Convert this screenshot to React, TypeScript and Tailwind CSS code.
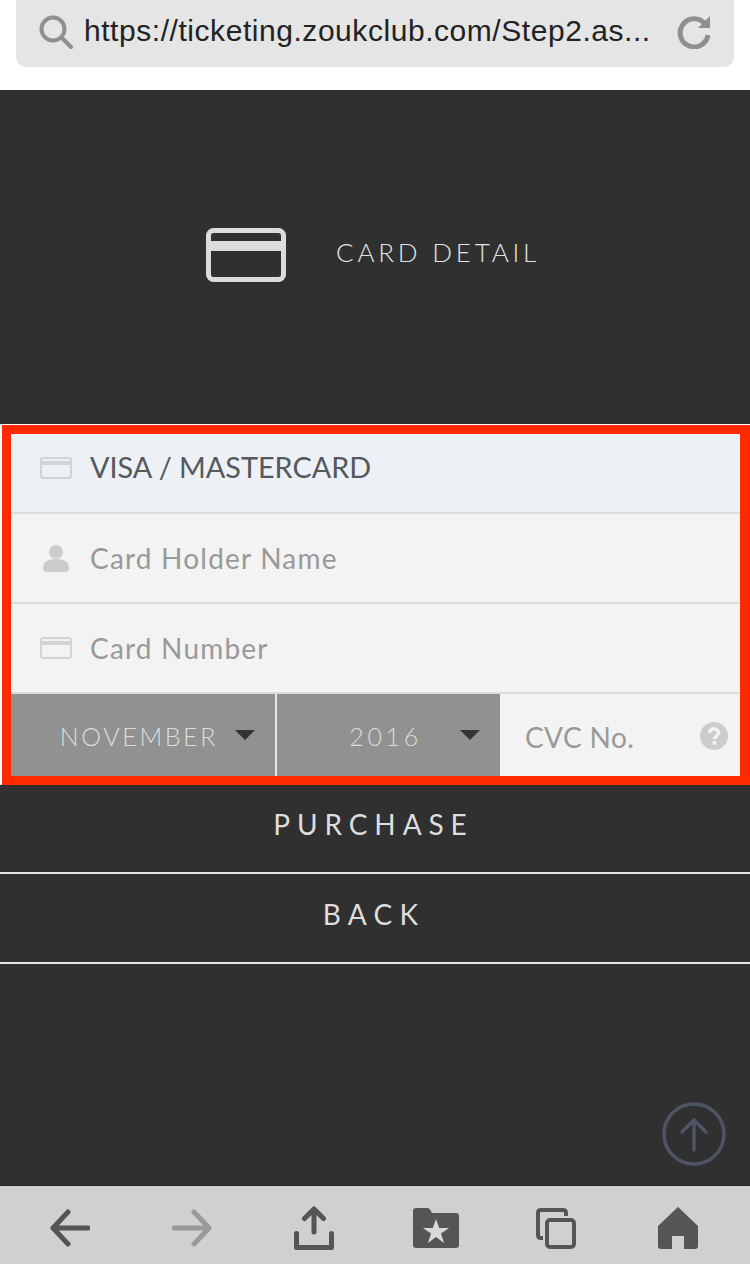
const CardIcon = ({ className = "" }: { className?: string }) => (
  <svg viewBox="0 0 32 22" className={className} fill="none">
    <rect x="1" y="1" width="30" height="20" rx="2" stroke="#d2d3d5" strokeWidth="2" />
    <rect x="1" y="4" width="30" height="4" fill="#d2d3d5" />
  </svg>
);

const futura = "font-['Lato','Open_Sans',sans-serif]";
const muli = "font-['Lato','Noto_Sans',sans-serif]";

function Caret() {
  return (
    <svg viewBox="0 0 20 10" className="w-[20px] h-[10px] shrink-0">
      <path d="M0 0H20L10 10Z" fill="#333333" />
    </svg>
  );
}

function Row({ icon, text, strong }: { icon: React.ReactNode; text: string; strong?: boolean }) {
  return (
    <div className={`flex items-center border-b-2 border-[#dcdcdc] ${strong ? "bg-[#edf0f5] h-[80px] pb-[10px]" : "bg-[#f3f3f3] h-[90px]"}`}>
      <div className="w-[32px] ml-[29px] flex justify-center">{icon}</div>
      <span className={`ml-[18px] ${muli} ${strong ? "text-[28.800px] text-[#55585d]" : "text-[28px] tracking-[1.2px] text-[#999999]"}`}>{text}</span>
    </div>
  );
}

export default function App() {
  return (
    <div className="relative w-[750px] h-[1264px] overflow-hidden bg-white flex flex-col">
      <div className="h-[90px] shrink-0 px-4">
        <div className="h-[67px] bg-[#e5e5e5] rounded-b-[10px] flex items-center pl-[23px] pr-[23px]">
          <svg viewBox="0 0 34 34" className="w-[34px] h-[34px] shrink-0 mb-[4px]" fill="none" stroke="#8f8f8f" strokeWidth="4" strokeLinecap="round">
            <circle cx="14" cy="14" r="11.5" />
            <path d="M22.5 22.5L32 32" />
          </svg>
          <span className="ml-[11px] flex-1 whitespace-nowrap text-[30px] tracking-[0.55px] text-[#222222] font-['Liberation_Sans',sans-serif] mb-[7px]">https://ticketing.zoukclub.com/Step2.as...</span>
          <svg viewBox="0 0 34 34" className="w-[34px] h-[34px] shrink-0 mb-[4px]" fill="none" stroke="#8f8f8f" strokeWidth="5">
            <path d="M28 9A14 14 0 1 0 31 20" />
            <path d="M21 13H33V1Z" fill="#8f8f8f" stroke="none" />
          </svg>
        </div>
      </div>

      <div className="flex-1 bg-[#303030] flex flex-col">
        <div className="h-[334px] flex items-center pl-[206px]">
          <svg viewBox="0 0 80 54" className="w-[80px] h-[54px] mb-[4px] shrink-0" fill="none">
            <rect x="2.5" y="2.5" width="75" height="49" rx="5" stroke="#dcdcdc" strokeWidth="5" />
            <rect x="3" y="13" width="74" height="10" fill="#dcdcdc" />
          </svg>
          <span className={`ml-[50px] mb-[10px] text-[26px] font-light tracking-[3.800px] text-[#e4e4e4] ${futura}`}>CARD DETAIL</span>
        </div>

        <div className="border-l-2 border-t border-white">
          <div className="border-[9px] border-r-[10px] border-[#ff2a00]">
            <Row strong icon={<CardIcon className="w-[32px] h-[22px]" />} text="VISA / MASTERCARD" />
            <Row
              icon={
                <svg viewBox="0 0 26 28" className="w-[26px] h-[28px]">
                  <circle cx="13" cy="8" r="7" fill="#cccccc" />
                  <path d="M0 24C0 17 6 15 13 15S26 17 26 24C26 27 24 28 22 28H4C2 28 0 27 0 24Z" fill="#cccccc" />
                </svg>
              }
              text="Card Holder Name"
            />
            <Row icon={<CardIcon className="w-[32px] h-[22px]" />} text="Card Number" />
            <div className="flex h-[82px]">
              <div className="w-[264px] bg-[#919191] flex items-center justify-end pr-[20px] gap-[17px]">
                <span className={`mt-[3px] text-[25px] tracking-[2.600px] text-[#dcdcdc] ${futura} font-light`}>NOVEMBER</span>
                <Caret />
              </div>
              <div className="w-[225px] bg-[#919191] border-l-2 border-[#e6e6e6] flex items-center justify-end pr-[20px] gap-[38px]">
                <span className={`mt-[3px] text-[25px] tracking-[3.700px] text-[#dcdcdc] ${futura} font-light`}>2016</span>
                <Caret />
              </div>
              <div className="flex-1 bg-[#f3f3f3] flex items-center pl-[25px] pr-[12px] justify-between">
                <span className={`mt-[4px] text-[28px] tracking-[0.4px] text-[#999999] ${muli}`}>CVC No.</span>
                <svg viewBox="0 0 28 28" className="w-[28px] h-[28px] mt-[2px]">
                  <circle cx="14" cy="14" r="14" fill="#cccccc" />
                  <path d="M9.500 11C9.500 8.500 11.500 7 14 7S18.500 8.500 18.500 11C18.500 14 14.500 14 14.500 17" fill="none" stroke="#f3f3f3" strokeWidth="3.400" />
                  <rect x="12.600" y="19" width="3.600" height="3.600" fill="#f3f3f3" />
                </svg>
              </div>
            </div>
          </div>
        </div>

        <div className={`h-[89px] pb-[9px] pr-[3px] flex items-center justify-center border-b-2 border-[#e6e6e6] text-[28px] tracking-[6.900px] text-[#dedede] font-normal ${futura}`}>PURCHASE</div>
        <div className={`h-[90px] pb-[8px] pr-[2px] flex items-center justify-center border-b-2 border-[#e6e6e6] text-[28px] tracking-[7.300px] text-[#dedede] font-normal ${futura}`}>BACK</div>
      </div>

      <div className="h-[79px] shrink-0 bg-[#d0d0d0] border-t border-[#222222]">
        <div className="h-full grid grid-cols-[repeat(6,122px)] pl-[9px] items-center justify-items-center">
          <svg viewBox="0 0 40 38" className="w-[40px] h-[38px] mt-[6px]" fill="none" stroke="#555555" strokeWidth="5" strokeLinecap="round" strokeLinejoin="round">
            <path d="M38 19H3M18 3L3 19L18 35" />
          </svg>
          <svg viewBox="0 0 40 38" className="w-[40px] h-[38px] mt-[6px]" fill="none" stroke="#9a9a9a" strokeWidth="5" strokeLinecap="round" strokeLinejoin="round">
            <path d="M2 19H37M22 3L37 19L22 35" />
          </svg>
          <svg viewBox="0 0 40 44" className="w-[40px] h-[44px] mt-[6px]" fill="none" stroke="#555555" strokeWidth="5" strokeLinecap="round" strokeLinejoin="round">
            <path d="M20 26V3M10.500 12.500L20 3L29.500 12.500" />
            <path d="M2.500 27.500V41.500H37.500V27.500" />
          </svg>
          <svg viewBox="0 0 46 40" className="w-[46px] h-[40px] mt-[6px]">
            <path d="M0 3C0 1 1 0 3 0H14C16 0 17 1 19 5H43C45 5 46 6 46 8V37C46 39 45 40 43 40H3C1 40 0 39 0 37Z" fill="#555555" />
            <path d="M23 11L26.200 20H36L28 25.500L31 35L23 29L15 35L18 25.500L10 20H19.800Z" fill="#d8d8d8" />
          </svg>
          <svg viewBox="0 0 40 41" className="w-[40px] h-[41px] mt-[6px] mr-[4px]" fill="none" stroke="#555555" strokeWidth="4">
            <path d="M30 8V5C30 3 29 2 27 2H5C3 2 2 3 2 5V27C2 29 3 30 5 30H7" />
            <rect x="11" y="12" width="27" height="27" rx="3" />
          </svg>
          <svg viewBox="0 0 40 42" className="w-[40px] h-[42px] mt-[6px] mr-[4px]">
            <path d="M20 0L40 19V39C40 41 39 42 37 42H26V29H14V42H3C1 42 0 41 0 39V19Z" fill="#555555" />
          </svg>
        </div>
      </div>

      <svg viewBox="0 0 64 64" className="absolute left-[662px] top-[1102px] w-[64px] h-[64px]" fill="none" stroke="#4d5564" strokeWidth="3.500" strokeLinecap="round" strokeLinejoin="round">
        <circle cx="32" cy="32" r="30" />
        <path d="M32 48V18M20 30L32 18L44 30" />
      </svg>
    </div>
  );
}
